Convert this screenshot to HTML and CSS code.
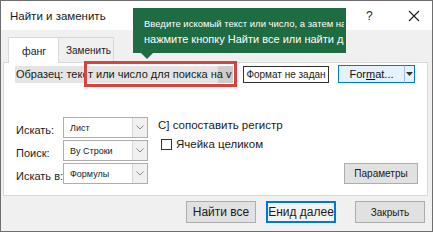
FILE: index.html
```html
<!DOCTYPE html>
<html lang="ru">
<head>
<meta charset="utf-8">
<link rel="stylesheet" href="styles.css">
</head>
<body>
<div class="window">
  <div class="titlebar">
    <span class="title">Найти и заменить</span>
    <span class="help">?</span>
    <span class="close">
      <svg width="12" height="12" viewBox="0 0 12 12"><path d="M1 1L11 11M11 1L1 11" stroke="#222" stroke-width="1.2" fill="none"/></svg>
    </span>
  </div>
  <div class="content">
    <div class="tabs">
      <div class="tab active">фанг</div>
      <div class="tab">Заменить</div>
    </div>
    <div class="panel">
      <div class="row1">
        <div class="sample">Образец: текст или число для поиска на v</div>
        <div class="redbox"></div>
        <div class="fmt-none">Формат не задан</div>
        <div class="fmt-btn">For<u>m</u>at...</div>
        <div class="fmt-drop"><svg width="7" height="4" viewBox="0 0 7 4"><path d="M0 0H7L3.5 4Z" fill="#333"/></svg></div>
      </div>
      <div class="options">
        <div class="selects">
          <span class="lbl">Искать:</span>
          <div class="select"><span class="sel-text">Лист</span><span class="sel-arrow"><svg width="8" height="5" viewBox="0 0 8 5"><path d="M0.5 0.5L4 4L7.5 0.5" stroke="#8a8a8a" fill="none"/></svg></span></div>
          <span class="lbl">Поиск:</span>
          <div class="select"><span class="sel-text">By Строки</span><span class="sel-arrow"><svg width="8" height="5" viewBox="0 0 8 5"><path d="M0.5 0.5L4 4L7.5 0.5" stroke="#8a8a8a" fill="none"/></svg></span></div>
          <span class="lbl lbl-over">Искать в:</span>
          <div class="select"><span class="sel-text">Формулы</span><span class="sel-arrow"><svg width="8" height="5" viewBox="0 0 8 5"><path d="M0.5 0.5L4 4L7.5 0.5" stroke="#8a8a8a" fill="none"/></svg></span></div>
        </div>
        <div class="checks">
          <div class="check">С] сопоставить регистр</div>
          <div class="check"><span class="box"></span>Ячейка целиком</div>
        </div>
        <div class="params-col">
          <div class="btn params">Параметры</div>
        </div>
      </div>
    </div>
    <div class="buttons">
      <div class="btn big">Найти все</div>
      <div class="btn big default">Енид далее</div>
      <div class="btn small">Закрыть</div>
    </div>
  </div>
  <div class="tooltip">
    <div class="tt-l1">Введите искомый текст или число, а затем нажмите</div>
    <div class="tt-l2">нажмите кнопку Найти все или найти далее</div>
    <span class="tt-arrow"></span>
  </div>
</div>
</body>
</html>
```
FILE: styles.css
```css
* { box-sizing: border-box; }
html, body { margin: 0; padding: 0; }
body {
  font-family: "Liberation Sans", Arial, sans-serif;
  color: #1a1a1a;
  background: #fff;
}
.window {
  position: relative;
  width: 433px;
  height: 232px;
  border: 1px solid #6e6e6e;
  display: flex;
  flex-direction: column;
  overflow: hidden;
}
.titlebar {
  height: 29px;
  background: #fff;
  display: flex;
  align-items: center;
  padding-left: 9px;
  flex: none;
}
.title { font-size: 11.5px; }
.help { font-size: 12px; width: 42px; margin-left: auto; }
.close { width: 24px; display: flex; align-items: center; }
.content {
  flex: 1;
  background: #f0f0f0;
  padding: 7px 4px 0 2px;
  display: flex;
  flex-direction: column;
}
.tabs {
  display: flex;
  height: 25px;
  padding-left: 5px;
  flex: none;
}
.tab {
  font-size: 10px;
  height: 25px;
  border: 1px solid #d9d9d9;
  border-bottom: none;
  display: flex;
  align-items: center;
}
.tab.active {
  width: 51px;
  background: #fff;
  height: 26px;
  position: relative;
  z-index: 1;
  margin-bottom: -1px;
  padding-left: 13px;
  font-size: 10.5px;
}
.tab:not(.active) {
  width: 55px;
  border-left: none;
  background: #f0f0f0;
  padding-left: 7px;
  padding-top: 1px;
}
.panel {
  height: 134px;
  background: #fff;
  border: 1px solid #d9d9d9;
  flex: none;
  display: flex;
  flex-direction: column;
}
.row1 {
  display: flex;
  align-items: center;
  height: 26px;
  margin-top: -2px;
  padding-left: 11px;
  font-size: 11px;
  position: relative;
}
.sample {
  width: 218px;
  height: 17px;
  line-height: 17px;
  padding-left: 1px;
  white-space: nowrap;
  overflow: hidden;
  background: linear-gradient(to right, #e4e4e4 0, #e4e4e4 203px, #cdcdcd 203px);
}
.redbox {
  position: absolute;
  left: 80px;
  top: 0;
  width: 153px;
  height: 26px;
  border: 3px solid #d9423f;
  box-shadow: inset 0 0 0 1px #fff;
}
.fmt-none {
  margin-left: 10px;
  width: 86px;
  height: 17px;
  border: 1px solid #333;
  background: #fff;
  font-size: 10px;
  display: flex;
  align-items: center;
  justify-content: center;
  white-space: nowrap;
}
.fmt-btn {
  margin-left: 9px;
  width: 67px;
  height: 18px;
  border: 1px solid #0078d7;
  background: #e5f1fb;
  font-size: 11px;
  display: flex;
  align-items: center;
  justify-content: center;
  color: #111;
}
.fmt-drop {
  width: 11px;
  height: 18px;
  border: 1px solid #0078d7;
  border-left: 1px solid #9cc3e6;
  margin-left: -1px;
  background: #e5f1fb;
  display: flex;
  align-items: center;
  justify-content: center;
}
.options {
  display: flex;
  margin-top: 30px;
  padding-left: 12px;
}
.selects {
  display: grid;
  grid-template-columns: 47px 85px;
  grid-auto-rows: 21px;
  row-gap: 2px;
  align-items: center;
}
.lbl { font-size: 11px; white-space: nowrap; padding-top: 4px; }
.lbl-over { position: relative; z-index: 1; }
.select {
  height: 21px;
  border: 1px solid #adadad;
  background: #fff;
  display: flex;
  align-items: stretch;
}
.sel-text { flex: 1; font-size: 9px; padding-left: 6px; display: flex; align-items: center; }
.sel-arrow {
  width: 15px;
  background: #f0f0f0;
  border-left: 1px solid #d6d6d6;
  display: flex;
  align-items: center;
  justify-content: center;
}
.checks {
  margin-left: 10px;
  font-size: 11.5px;
  display: flex;
  flex-direction: column;
  gap: 5px;
  padding-top: 1px;
}
.check { display: flex; align-items: center; height: 14px; }
.box {
  width: 11px;
  height: 11px;
  border: 1px solid #333;
  margin-left: 3px;
  margin-right: 4px;
  background: #fff;
}
.params-col {
  flex: 1;
  display: flex;
  align-items: flex-end;
  justify-content: flex-end;
  padding-right: 9px;
}
.btn {
  background: #e1e1e1;
  border: 1px solid #adadad;
  display: flex;
  align-items: center;
  justify-content: center;
  white-space: nowrap;
}
.params {
  width: 74px;
  height: 21px;
  font-size: 10px;
}
.buttons {
  display: flex;
  justify-content: flex-end;
  margin-top: 5px;
  padding-right: 3px;
}
.buttons .btn { width: 70px; height: 22px; }
.big { font-size: 12px; margin-right: 10px; }
.default {
  border: 2px solid #0078d7;
  background: #f3f3f3;
  margin-right: 19px;
}
.small { font-size: 10px; }
.tooltip {
  position: absolute;
  left: 132px;
  top: 7px;
  width: 213px;
  height: 45px;
  background: #1f6b42;
  color: #fff;
  padding: 9px 0 0 11px;
  white-space: nowrap;
}
.tt-l1, .tt-l2 { overflow: hidden; width: 200px; }
.tt-l1 { font-size: 9.5px; line-height: 13px; }
.tt-l2 { font-size: 11px; line-height: 16px; margin-top: 1px; }
.tt-arrow {
  position: absolute;
  left: 8px;
  bottom: -6px;
  border-left: 6px solid transparent;
  border-right: 6px solid transparent;
  border-top: 6px solid #1f6b42;
}
```
